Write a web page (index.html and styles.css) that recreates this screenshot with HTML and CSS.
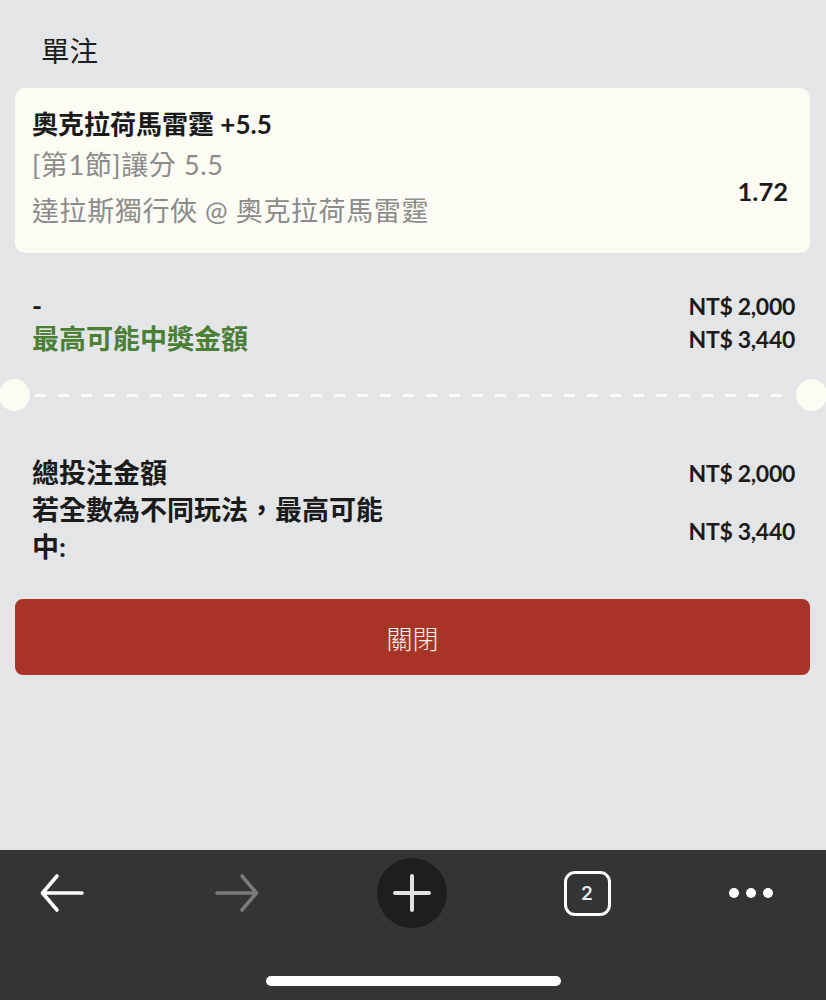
FILE: index.html
```html
<!DOCTYPE html>
<html lang="zh-Hant">

<head>
    <meta charset="UTF-8">
    <meta name="viewport" content="width=device-width, initial-scale=1.0">
    <title>單注</title>
    <link rel="stylesheet" href="styles.css">
</head>

<body>
    <div class="screen">
        <div class="content">
            <h1 class="page-title">單注</h1>

            <div class="bet-card">
                <div class="bet-info">
                    <div class="bet-pick">奧克拉荷馬雷霆 +5.5</div>
                    <div class="bet-market">[第1節]讓分 5.5</div>
                    <div class="bet-match">達拉斯獨行俠 @ 奧克拉荷馬雷霆</div>
                </div>
                <div class="bet-odds">1.72</div>
            </div>

            <div class="summary summary-top">
                <div class="row">
                    <span class="label">-</span>
                    <span class="amount">NT$ 2,000</span>
                </div>
                <div class="row">
                    <span class="label label-green">最高可能中獎金額</span>
                    <span class="amount">NT$ 3,440</span>
                </div>
            </div>

            <div class="divider">
                <span class="notch"></span>
                <span class="dashes"></span>
                <span class="notch"></span>
            </div>

            <div class="summary summary-total">
                <div class="row">
                    <span class="label">總投注金額</span>
                    <span class="amount">NT$ 2,000</span>
                </div>
                <div class="row row-tall">
                    <span class="label label-wrap">若全數為不同玩法，最高可能中:</span>
                    <span class="amount">NT$ 3,440</span>
                </div>
            </div>

            <button class="close-btn">關閉</button>
        </div>

        <div class="toolbar">
            <div class="tb-icons">
                <div class="tb-item">
                    <svg width="46" height="40" viewBox="0 0 46 40">
                        <path d="M43 20 H4 M18 3 L3.5 20 L18 37" fill="none" stroke="#ffffff" stroke-width="3.6" stroke-linecap="round" stroke-linejoin="round" />
                    </svg>
                </div>
                <div class="tb-item">
                    <svg width="46" height="40" viewBox="0 0 46 40">
                        <path d="M3 20 H42 M28 3 L42.5 20 L28 37" fill="none" stroke="#7a7a7c" stroke-width="3.6" stroke-linecap="round" stroke-linejoin="round" />
                    </svg>
                </div>
                <div class="tb-item tb-new">
                    <svg width="38" height="38" viewBox="0 0 38 38">
                        <path d="M19 2 V36 M2 19 H36" fill="none" stroke="#e2e2e4" stroke-width="4" stroke-linecap="round" />
                    </svg>
                </div>
                <div class="tb-item">
                    <span class="tab-count">2</span>
                </div>
                <div class="tb-item tb-more">
                    <span class="dot"></span>
                    <span class="dot"></span>
                    <span class="dot"></span>
                </div>
            </div>
            <div class="home-bar"></div>
        </div>
    </div>
</body>

</html>
```

FILE: styles.css
```css
* {
    box-sizing: border-box;
}

body {
    margin: 0;
    font-family: 'Lato', 'Noto Sans CJK TC', sans-serif;
    color: #1b1b1b;
    background-color: #e4e5e7;
}

.screen {
    height: 1000px;
    display: flex;
    flex-direction: column;
}

.content {
    flex: 1;
    padding: 31px 16px 0 15px;
}

.page-title {
    height: 40px;
    margin: 0 0 17px 26px;
    font-size: 28.5px;
    font-weight: 400;
    line-height: 40px;
    color: #1e1e1e;
}

/* bet card */
.bet-card {
    display: flex;
    justify-content: space-between;
    height: 165px;
    padding: 18px 22px 0 17px;
    background-color: #fcfcf4;
    border-radius: 10px;
}

.bet-pick {
    height: 36px;
    font-size: 26px;
    font-weight: 700;
    line-height: 36px;
    margin-bottom: 4px;
}

.bet-market,
.bet-match {
    height: 38px;
    font-size: 27px;
    line-height: 38px;
    color: #8b8b8b;
    letter-spacing: 0.6px;
}

.bet-match {
    margin-top: 8px;
}

.bet-odds {
    padding-top: 70px;
    font-size: 25.5px;
    font-weight: 700;
    line-height: 30px;
}

/* summaries */
.summary {
    padding: 0 15px 0 17px;
}

.summary-top {
    margin-top: 36px;
}

.summary-top .row {
    height: 33px;
}

.summary-total {
    margin-top: 43px;
}

.summary-total .row {
    height: 37px;
}

.summary-total .row-tall {
    height: 74px;
}

.row {
    display: flex;
    justify-content: space-between;
    align-items: center;
}

.label {
    font-size: 27px;
    font-weight: 700;
    line-height: 37px;
}

.label-green {
    color: #4b7f36;
}

.label-wrap {
    width: 362px;
}

.amount {
    font-size: 23px;
    font-weight: 700;
    letter-spacing: -0.3px;
    line-height: 30px;
}

.row-tall .amount {
    padding-top: 5px;
}

/* ticket divider */
.divider {
    display: flex;
    align-items: center;
    height: 32px;
    margin: 24px -16px 0 -15px;
}

.notch {
    width: 31px;
    height: 32px;
    border-radius: 50%;
    background-color: #fcfcf4;
}

.divider .notch:first-child {
    margin-left: -1px;
}

.divider .notch:last-child {
    margin-right: -1px;
}

.dashes {
    flex: 1;
    height: 3px;
    margin: 0 5px;
    background: repeating-linear-gradient(90deg, #fcfcf4 0 11px, transparent 11px 23px);
}

.close-btn {
    display: block;
    width: 100%;
    height: 76px;
    margin-top: 34px;
    border: none;
    border-radius: 8px;
    background-color: #a83327;
    color: #f7f1ef;
    font-family: 'Noto Sans CJK TC', sans-serif;
    font-size: 26px;
    font-weight: 300;
}

/* browser toolbar */
.toolbar {
    height: 150px;
    background-color: #333436;
    padding-top: 8px;
}

.tb-icons {
    display: flex;
    gap: 105px;
    padding-left: 27px;
}

.tb-item {
    width: 70px;
    height: 70px;
    display: flex;
    align-items: center;
    justify-content: center;
}

.tb-new {
    border-radius: 50%;
    background-color: #1e1e20;
}

.tab-count {
    width: 47px;
    height: 45px;
    border: 3px solid #ffffff;
    border-radius: 11px;
    display: flex;
    align-items: center;
    justify-content: center;
    color: #e8e8ea;
    font-family: 'Inter', sans-serif;
    font-size: 19px;
    font-weight: 600;
}

.tb-more {
    gap: 7px;
    margin-left: -11px;
}

.dot {
    width: 10px;
    height: 10px;
    border-radius: 50%;
    background-color: #ffffff;
}

.home-bar {
    width: 295px;
    height: 10px;
    margin: 48px auto 0;
    border-radius: 5px;
    background-color: #ffffff;
}
```
